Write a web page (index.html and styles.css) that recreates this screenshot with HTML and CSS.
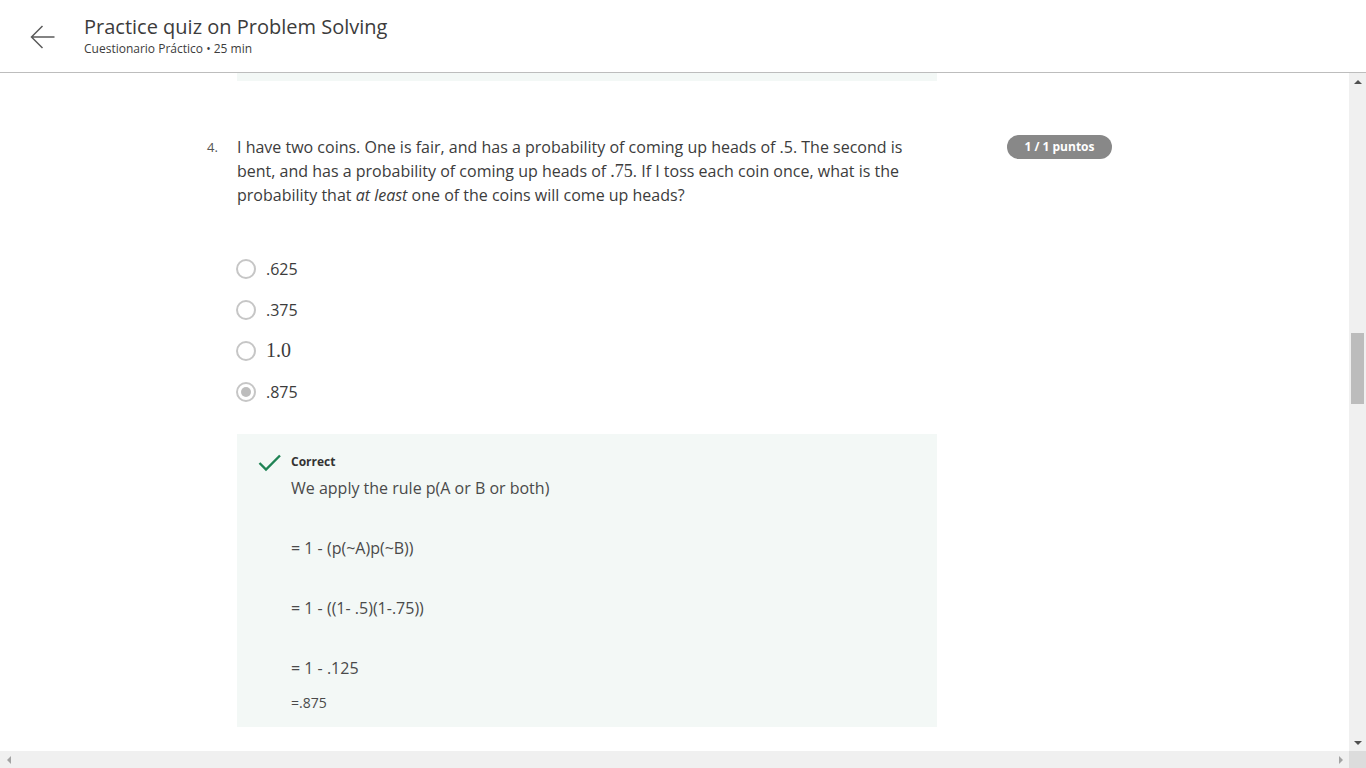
FILE: index.html
```html
<!DOCTYPE html>
<html lang="es">
<head>
<meta charset="utf-8">
<title>Practice quiz on Problem Solving</title>
<link rel="stylesheet" href="styles.css">
</head>
<body>
<div class="page">
  <header class="header">
    <div class="back">
      <svg width="26" height="26" viewBox="0 0 26 26"><path d="M2.5 13 H25.5 M13.5 2 L2.5 13 L13.5 24" fill="none" stroke="#5b5b5b" stroke-width="1.5"/></svg>
    </div>
    <div class="titles">
      <h1 class="title">Practice quiz on Problem Solving</h1>
      <div class="subtitle">Cuestionario Práctico • 25 min</div>
    </div>
  </header>
  <div class="main">
    <div class="content">
      <div class="prev-feedback"></div>
      <div class="question">
        <div class="qnum">4.</div>
        <div class="qbody">
          <p class="qtext">I have two coins. One is fair, and has a probability of coming up heads of .5. The second is bent, and has a probability of coming up heads of <span class="math">.75</span>. If I toss each coin once, what is the probability that <em>at least</em> one of the coins will come up heads?</p>
          <div class="options">
            <div class="option"><span class="radio"></span><span class="label">.625</span></div>
            <div class="option"><span class="radio"></span><span class="label">.375</span></div>
            <div class="option"><span class="radio"></span><span class="label math big">1.0</span></div>
            <div class="option"><span class="radio checked"></span><span class="label">.875</span></div>
          </div>
          <div class="feedback">
            <svg class="check" width="24" height="20" viewBox="0 0 24 20"><path d="M1.5 10 L8 16.5 L22 2.5" fill="none" stroke="#1f8354" stroke-width="2.4"/></svg>
            <div class="fb-body">
              <div class="fb-title">Correct</div>
              <p class="fb-line">We apply the rule p(A or B or both)</p>
              <p class="fb-line">= 1 - (p(~A)p(~B))</p>
              <p class="fb-line">= 1 - ((1- .5)(1-.75))</p>
              <p class="fb-line">= 1 - .125</p>
              <p class="fb-last">=.875</p>
            </div>
          </div>
        </div>
        <div class="badge">1 / 1 puntos</div>
      </div>
    </div>
    <div class="vscroll">
      <div class="sb-btn"><span class="tri-up"></span></div>
      <div class="vtrack"><div class="vthumb"></div></div>
      <div class="sb-btn"><span class="tri-down"></span></div>
    </div>
  </div>
  <div class="hscroll">
    <div class="sb-btn"><span class="tri-left"></span></div>
    <div class="htrack"></div>
    <div class="sb-btn"><span class="tri-right"></span></div>
    <div class="corner"></div>
  </div>
</div>
</body>
</html>
```

FILE: styles.css
```css
* { box-sizing: border-box; }
html, body { margin: 0; padding: 0; }
body {
  font-family: "Open Sans", "Liberation Sans", sans-serif;
  color: #3c3c3c;
  background: #fff;
  overflow: hidden;
}
.page {
  width: 1366px;
  height: 768px;
  display: flex;
  flex-direction: column;
}
.header {
  height: 73px;
  flex: none;
  border-bottom: 1px solid #bdbdbd;
  display: flex;
  align-items: flex-start;
}
.back {
  margin: 24px 0 0 29px;
  width: 26px;
  height: 26px;
}
.back svg { display: block; }
.titles {
  margin-left: 29px;
  padding-top: 13px;
}
.title {
  margin: 0;
  font-size: 20px;
  font-weight: 400;
  line-height: 28px;
  color: #3c3c3c;
}
.subtitle {
  font-size: 12px;
  line-height: 16px;
  color: #3c3c3c;
}
.main {
  flex: 1;
  display: flex;
  min-height: 0;
}
.content {
  flex: 1;
  overflow: hidden;
}
.prev-feedback {
  margin-left: 237px;
  width: 700px;
  height: 8px;
  background: #f3f8f6;
}
.question {
  margin-top: 54px;
  margin-left: 207px;
  display: flex;
  align-items: flex-start;
}
.qnum {
  width: 30px;
  font-size: 13px;
  line-height: 24px;
  color: #555;
}
.qbody {
  width: 700px;
}
.qtext {
  margin: 0;
  width: 680px;
  font-size: 16px;
  line-height: 24px;
  color: #3c3c3c;
}
.math {
  font-family: "Liberation Serif", "DejaVu Serif", serif;
  font-size: 18px;
}
.math.big {
  font-size: 20px;
}
.options {
  margin-top: 41px;
}
.option {
  height: 41px;
  display: flex;
  align-items: center;
}
.radio {
  width: 20px;
  height: 20px;
  border: 2px solid #c6c6c6;
  border-radius: 50%;
  margin-left: -1px;
  display: flex;
  align-items: center;
  justify-content: center;
  flex: none;
}
.radio.checked::after {
  content: "";
  width: 10px;
  height: 10px;
  border-radius: 50%;
  background: #bdbdbd;
}
.label {
  margin-left: 10px;
  font-size: 16px;
  color: #3c3c3c;
}
.feedback {
  margin-top: 22px;
  background: #f3f8f6;
  padding: 19px 0 13px 21px;
  display: flex;
  align-items: flex-start;
}
.check {
  flex: none;
  display: block;
}
.fb-body {
  margin-left: 9px;
}
.fb-title {
  font-size: 12px;
  font-weight: 700;
  line-height: 18px;
  color: #333;
}
.fb-line {
  margin: 0;
  font-size: 16px;
  line-height: 24px;
  color: #4a4a4a;
}
.fb-title + .fb-line { margin-top: 5px; }
.fb-line + .fb-line { margin-top: 36px; }
.fb-last {
  margin: 12px 0 0;
  font-size: 14px;
  line-height: 22px;
  color: #4a4a4a;
}
.badge {
  margin-left: 70px;
  width: 105px;
  height: 24px;
  border-radius: 12px;
  background: #888;
  color: #fff;
  font-size: 12px;
  font-weight: 700;
  line-height: 24px;
  text-align: center;
}
.vscroll {
  width: 17px;
  flex: none;
  background: #f0f0f0;
  display: flex;
  flex-direction: column;
}
.sb-btn {
  width: 17px;
  height: 17px;
  flex: none;
  display: flex;
  align-items: center;
  justify-content: center;
}
.vtrack {
  flex: 1;
}
.vthumb {
  margin: 243px auto 0;
  width: 13px;
  height: 71px;
  background: #bcbcbc;
}
.tri-up {
  width: 0; height: 0;
  border-left: 4px solid transparent;
  border-right: 4px solid transparent;
  border-bottom: 4px solid #505050;
}
.tri-down {
  width: 0; height: 0;
  border-left: 4px solid transparent;
  border-right: 4px solid transparent;
  border-top: 4px solid #505050;
}
.hscroll {
  height: 17px;
  flex: none;
  display: flex;
  background: #f0f0f0;
}
.htrack { flex: 1; }
.tri-left {
  width: 0; height: 0;
  border-top: 4px solid transparent;
  border-bottom: 4px solid transparent;
  border-right: 4px solid #a3a3a3;
}
.tri-right {
  width: 0; height: 0;
  border-top: 4px solid transparent;
  border-bottom: 4px solid transparent;
  border-left: 4px solid #a3a3a3;
}
.corner {
  width: 17px;
  background: #dcdcdc;
}
```
